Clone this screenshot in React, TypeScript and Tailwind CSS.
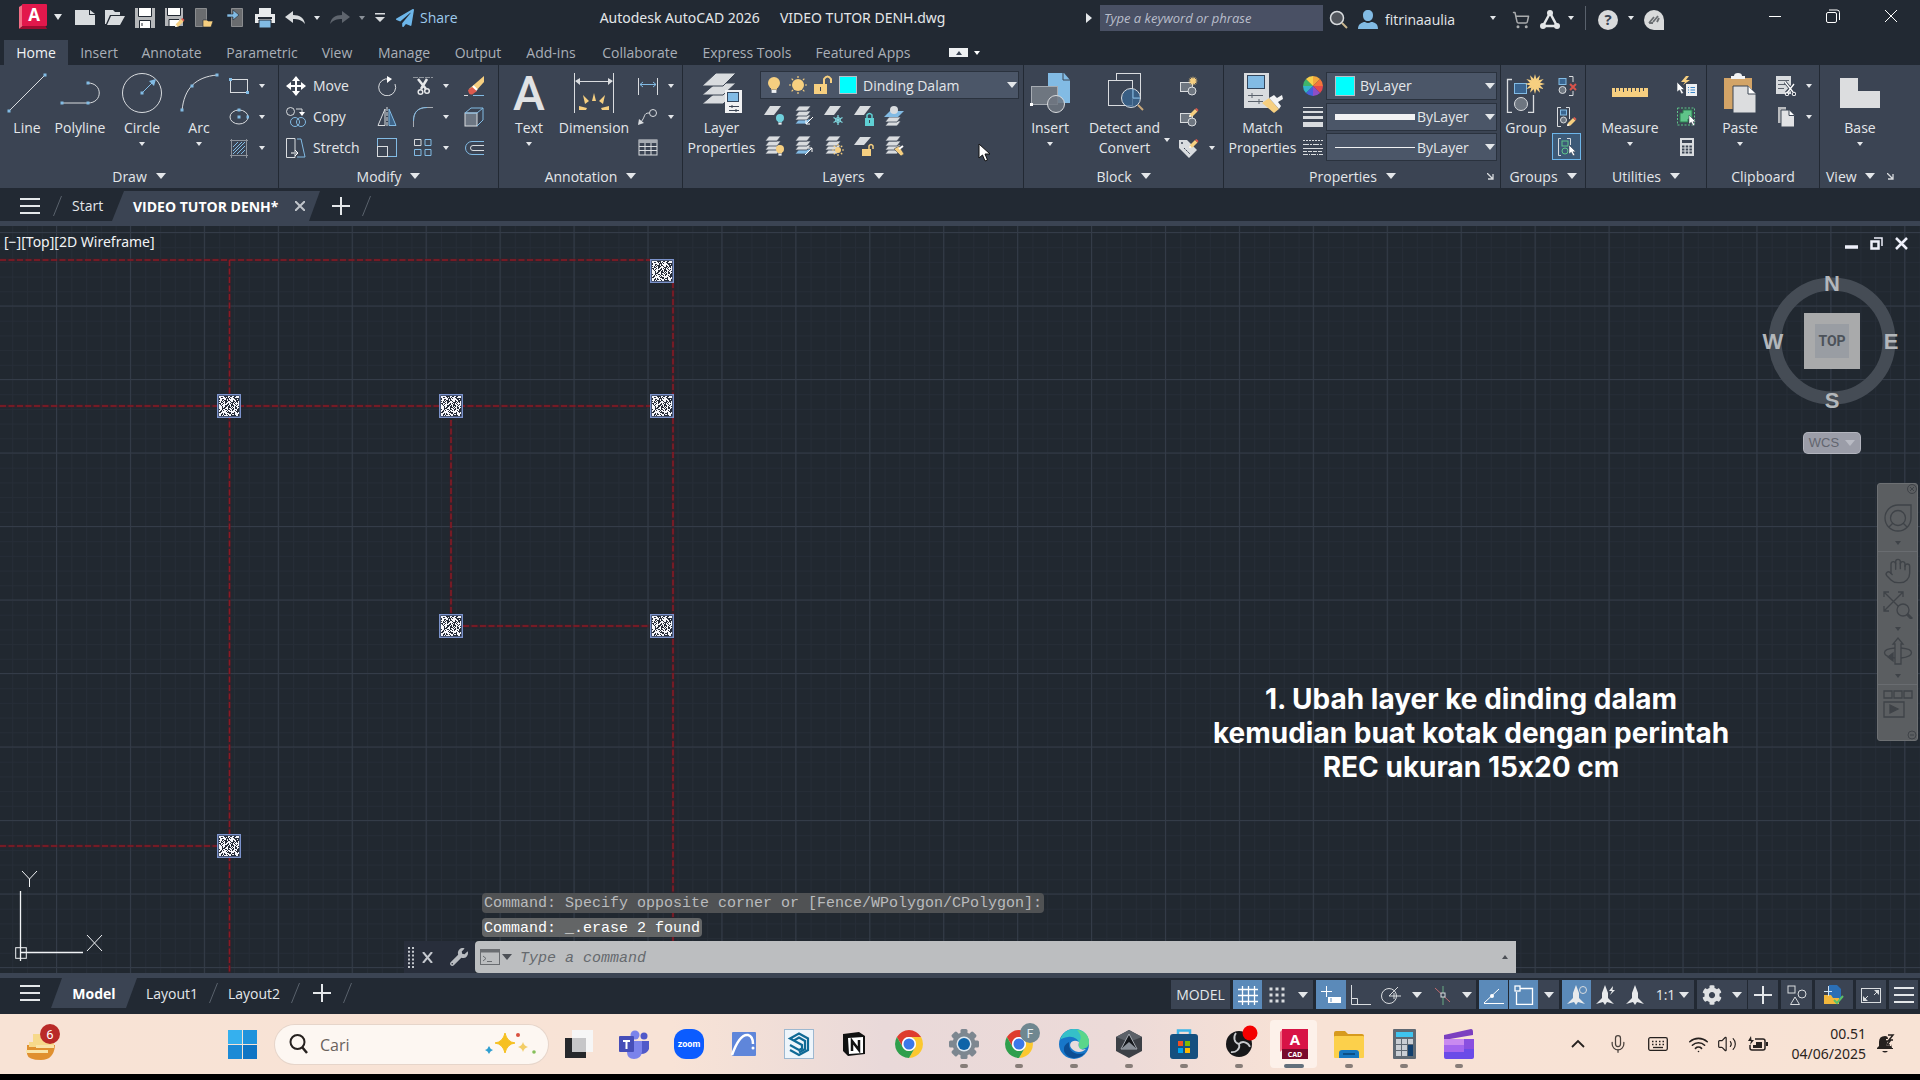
import type { ReactNode } from "react";
import { FaCog, FaWrench, FaPaperPlane } from "react-icons/fa";
import { ShoppingCart, Mic, Wifi, Volume2, Hand } from "lucide-react";

const W = "#d9dcdf";
const B = "#82bbe4";
const Y = "#f6cf80";

function Svg({ s = 20, children, className = "" }: { s?: number; children: ReactNode; className?: string }) {
  return (
    <svg
      width={s}
      height={s}
      viewBox={`0 0 ${s} ${s}`}
      fill="none"
      stroke={W}
      strokeWidth={1}
      className={"shrink-0 " + className}
      aria-hidden="true"
    >
      {children}
    </svg>
  );
}

function Caret({ big = false, className = "" }: { big?: boolean; className?: string }) {
  return (
    <svg
      width={big ? 10 : 6}
      height={big ? 6 : 4}
      viewBox="0 0 10 6"
      preserveAspectRatio="none"
      className={"shrink-0 " + className}
      fill="currentColor"
      aria-hidden="true"
    >
      <path d="M0 0H10L5 6Z" />
    </svg>
  );
}

function Dot({ x, y, r = 3 }: { x: number; y: number; r?: number }) {
  return <rect x={x - r / 2} y={y - r / 2} width={r} height={r} fill={B} stroke="none" />;
}

/* ---------- ribbon building blocks ---------- */

function Big({
  icon,
  label,
  second,
  caret,
  className,
}: {
  icon: ReactNode;
  label: string;
  second?: string;
  caret?: boolean;
  className: string;
}) {
  return (
    <button className={"flex shrink-0 flex-col items-center pt-2 leading-5 " + className}>
      {icon}
      <span className="mt-[5px] whitespace-nowrap">{label}</span>
      {second && <span className="whitespace-nowrap">{second}</span>}
      {caret && <Caret className="mt-1" />}
    </button>
  );
}

function Small({ label, icon, caret }: { label: string; icon: ReactNode; caret?: boolean }) {
  return (
    <div className="flex h-[31px] items-center gap-[3px]">
      <button aria-label={label}>{icon}</button>
      {caret && (
        <button aria-label={label + " options"} className="flex h-5 w-5 items-center justify-center">
          <Caret />
        </button>
      )}
    </div>
  );
}

function Col({ children, className = "" }: { children: ReactNode; className?: string }) {
  return <div className={"flex shrink-0 flex-col pt-[5px] " + className}>{children}</div>;
}

function Launcher() {
  return (
    <svg width="7" height="7" viewBox="0 0 7 7" stroke="#d9dcdf" strokeWidth="1.3" fill="none" aria-hidden="true">
      <path d="M0 0L6 6M6 1V6H1" />
    </svg>
  );
}

function Panel({
  title,
  menu = true,
  launcher,
  className,
  children,
}: {
  title: string;
  menu?: boolean;
  launcher?: boolean;
  className: string;
  children: ReactNode;
}) {
  return (
    <section className={"flex flex-col border-r border-[#222933] " + className}>
      <div className="flex h-[99px]">{children}</div>
      <div className="flex h-6 items-center">
        <div className="flex flex-1 items-center justify-center gap-[9px]">
          <span>{title}</span>
          {menu && <Caret big />}
        </div>
        {launcher && (
          <button aria-label={title + " settings"} className="mx-[6px]">
            <Launcher />
          </button>
        )}
      </div>
    </section>
  );
}

function Combo({
  label,
  value,
  before,
  className = "",
  selectClass = "",
}: {
  label: string;
  value: string;
  before: ReactNode;
  className?: string;
  selectClass?: string;
}) {
  return (
    <div className={"flex h-7 items-center border border-[#2a323e] bg-[#4b5668] pr-px " + className}>
      {before}
      <select aria-label={label} className={"h-full min-w-0 flex-1 appearance-none bg-transparent outline-none " + selectClass}>
        <option>{value}</option>
      </select>
      <Caret big />
    </div>
  );
}

/* ---------- reusable drawings ---------- */

const Sheet = ({ y, fill = W }: { y: number; fill?: string }) => (
  <path d={`M5 ${y}H17L13 ${y + 5}H1Z`} fill={fill} stroke="#3b4453" strokeWidth=".8" />
);

const Stack = ({ blue = false }: { blue?: boolean }) => (
  <>
    <Sheet y={13} fill={blue ? B : W} />
    <Sheet y={9} />
    <Sheet y={5} />
    <Sheet y={0} />
  </>
);

const Sun = ({ x, y, r, c = Y }: { x: number; y: number; r: number; c?: string }) => (
  <g transform={`translate(${x} ${y})`} stroke={c} strokeWidth="1.2">
    <circle r={r} fill={c} stroke="none" />
    {[0, 45, 90, 135, 180, 225, 270, 315].map((a) => (
      <path key={a} d={`M0 ${-r - 1}V${-r - 3}`} transform={`rotate(${a})`} />
    ))}
  </g>
);

const Burst = ({ x, y, r }: { x: number; y: number; r: number }) => (
  <g transform={`translate(${x} ${y})`} fill={Y} stroke="none">
    {[0, 30, 60, 90, 120, 150, 180, 210, 240, 270, 300, 330].map((a) => (
      <path key={a} d={`M${-r * 0.28} 0L0 ${-r}L${r * 0.28} 0Z`} transform={`rotate(${a})`} />
    ))}
  </g>
);

const Pencil = ({ x, y }: { x: number; y: number }) => (
  <g transform={`translate(${x} ${y})`} stroke="none">
    <path d="M0 9L1 6L6 1L8.500 3.500L3.500 8.500Z" fill={Y} />
    <path d="M6 1L7.500 0L9.500 2L8.500 3.500Z" fill="#dc5a4e" />
    <path d="M0 9L.8 6.600L2.600 8.400Z" fill="#fff" />
  </g>
);

const Cursor = ({ x, y, s = 1 }: { x: number; y: number; s?: number }) => (
  <path
    transform={`translate(${x} ${y}) scale(${s})`}
    d="M0 0V10L2.500 8L4.500 12L6.500 11L4.500 7.500H7.500Z"
    fill="#fff"
    stroke="#3b4453"
    strokeWidth=".6"
  />
);

const Scissors = ({ x, y }: { x: number; y: number }) => (
  <g transform={`translate(${x} ${y})`} stroke="#e6e8ea" strokeWidth="1.5">
    <path d="M0 0L8 10M9 0L3 10" strokeWidth="2.500" />
    <circle cx="2.500" cy="13" r="2.300" />
    <circle cx="9" cy="12" r="2.300" />
  </g>
);

const Bulb = ({ x, y, r, c }: { x: number; y: number; r: number; c: string }) => (
  <g transform={`translate(${x} ${y})`} stroke="none">
    <circle r={r} fill={c} />
    <path d={`M${-r * 0.5} ${r * 0.7}H${r * 0.5}V${r * 1.1}H${-r * 0.5}Z`} fill={c} />
    <rect x={-r * 0.4} y={r * 1.15} width={r * 0.8} height={r * 0.5} fill="#eef0f2" />
  </g>
);

/* ---------- title bar ---------- */

const quickIcons: { label: string; gap: string; art: ReactNode }[] = [
  { label: "New", gap: "", art: <path d="M0 2H14V7H20V17H0Z M15 2L20 6H15Z" fill={W} stroke="none" /> },
  {
    label: "Open",
    gap: "ml-[10px]",
    art: <path d="M0 16V2H8L10 4H15V7H5L1 16ZM6 8H20L15 17H2Z" fill={W} stroke="none" />,
  },
  {
    label: "Save",
    gap: "ml-[10px]",
    art: (
      <>
        <path d="M0 0H20V20H0Z" fill="#b5b7ba" stroke="none" />
        <path d="M4 0H16V8H4ZM5 12H15V20H5Z" fill="#fff" stroke="none" />
        <path d="M3.500 0V8.500H16.500V0M4.500 20V12.500H15.500V20M7 15V18" stroke="#222933" />
      </>
    ),
  },
  {
    label: "Save As",
    gap: "ml-[10px]",
    art: (
      <>
        <path d="M0 0H18V18H0Z" fill="#b5b7ba" stroke="none" />
        <path d="M3 0H15V7H3ZM4 11H14V18H4Z" fill="#fff" stroke="none" />
        <path d="M2.500 0V7.500H15.500V0M4 18V11.500H14" stroke="#222933" />
        <Pencil x={10} y={10} />
      </>
    ),
  },
  {
    label: "Open from Web and Mobile",
    gap: "ml-[10px]",
    art: (
      <>
        <path d="M.5 .5H11.500V18.500H.5Z" fill="#6a6c6f" stroke="#8a8c8f" />
        <path d="M8 12H12L13 13H18L16 19H8Z" fill={Y} stroke="#222933" strokeWidth=".6" />
      </>
    ),
  },
  {
    label: "Save to Web and Mobile",
    gap: "ml-[10px]",
    art: (
      <>
        <path d="M6.500 .5H17.500V18.500H6.500Z" fill="#6a6c6f" stroke="#8a8c8f" />
        <path d="M2 6H8V2L14 7L8 12V9H2Z" fill={B} stroke="#222933" strokeWidth=".6" />
      </>
    ),
  },
  {
    label: "Plot",
    gap: "ml-[10px]",
    art: (
      <>
        <path d="M4 0H16V6H4ZM0 6H20V15H0Z" fill="#e8eaec" stroke="none" />
        <path d="M3 9H17V11H3Z" fill="#222933" stroke="none" />
        <path d="M4 12H16V20H4Z" fill={B} stroke="#222933" />
      </>
    ),
  },
];

function TitleBar() {
  return (
    <header className="flex h-10 items-center pl-[18px] text-[14px] text-[#e4e7ea]">
      <button aria-label="Application menu" className="flex items-center gap-[6px] self-start pt-1">
        <svg width="30" height="26" viewBox="0 0 30 26" aria-hidden="true">
          <path d="M1 3L6 0V21L1 25Z" fill="#f26e85" />
          <path d="M1 25L6 21H27L29 25Z" fill="#9f0c31" />
          <rect x="4" width="25" height="22" rx="1" fill="#e2184c" />
          <text x="16" y="17" fontSize="17" fontWeight="700" fontFamily="Open Sans" fill="#fff" textAnchor="middle">
            A
          </text>
        </svg>
        <Caret big className="w-2" />
      </button>
      <div className="flex items-center self-start pl-[13px] pt-[7px]">
        {quickIcons.map((q) => (
          <button key={q.label} aria-label={q.label} className={q.gap}>
            <Svg>{q.art}</Svg>
          </button>
        ))}
        <button aria-label="Undo" className="ml-[10px]">
          <Svg>
            <path d="M0 9L8 3V7C15 7 19 10 20 16C17 12 13 11 8 11V15Z" fill={W} stroke="none" />
          </Svg>
        </button>
        <Caret className="ml-[9px]" />
        <button aria-label="Redo" className="ml-[10px]">
          <Svg>
            <path d="M20 9L12 3V7C5 7 1 10 0 16C3 12 7 11 12 11V15Z" fill="#5e646d" stroke="none" />
          </Svg>
        </button>
        <Caret className="ml-[9px] text-[#8a9098]" />
        <button aria-label="Customize quick access" className="ml-[9px]">
          <svg width="12" height="9" viewBox="0 0 12 9" fill="#d9dcdf" aria-hidden="true">
            <path d="M1 0H11V1.500H1ZM1 4H11L6 9Z" />
          </svg>
        </button>
        <button className="ml-[10px] flex items-center gap-[6px] text-[#9ecbee]">
          <FaPaperPlane size={18} color="#6db6ea" />
          Share
        </button>
      </div>
      <div className="ml-[142px] mt-[8px] flex gap-5 self-start whitespace-pre font-['Noto_Sans',sans-serif] text-[14px] leading-5">
        <span>Autodesk AutoCAD 2026</span>
        <span>VIDEO TUTOR DENH.dwg</span>
      </div>
      <div className="ml-auto flex shrink-0 items-center self-start">
        <svg width="6" height="10" viewBox="0 0 6 10" className="mr-2 mt-[5px]" fill="#e4e7ea" aria-hidden="true">
          <path d="M0 0L6 5L0 10Z" />
        </svg>
        <input
          aria-label="Search help"
          placeholder="Type a keyword or phrase"
          className="mt-[5px] h-[26px] w-[223px] bg-[#495064] px-1 text-[13px] italic text-white placeholder-[#b9becb] outline-none"
        />
        <button aria-label="Search" className="ml-[6px] mt-2">
          <Svg>
            <circle cx="8" cy="8" r="6.500" fill="#51555c" strokeWidth="1.500" />
            <path d="M13 13L18 18" stroke="#c9b68f" strokeWidth="2" />
          </Svg>
        </button>
        <button className="ml-[9px] mt-2 flex items-center gap-[7px]">
          <Svg>
            <path
              d="M10 0C13 0 15 2 15 5C15 9 13 11 10 11S5 9 5 5C5 2 7 0 10 0ZM0 19C0 14 4 12 7 12Q10 14 13 12C17 12 20 14 20 19Z"
              fill={B}
              stroke="none"
            />
          </Svg>
          <span className="w-[97px] text-left">fitrinaaulia</span>
        </button>
        <Caret className="ml-[8px] mt-[5px]" />
        <button aria-label="App store" className="ml-[16px] mt-2">
          <ShoppingCart size={18} color="#a9abad" />
        </button>
        <button aria-label="Autodesk account" className="ml-[10px] mt-2">
          <Svg>
            <path d="M10 3L3 16H17Z" stroke="#e4e6e8" strokeWidth="2.500" />
            <g fill="#e4e6e8" stroke="none">
              <circle cx="10" cy="3" r="3" />
              <circle cx="3" cy="16" r="3" />
              <circle cx="17" cy="16" r="3" />
            </g>
          </Svg>
        </button>
        <Caret className="ml-[8px] mt-[5px]" />
        <span className="ml-[11px] mt-[5px] h-6 w-px bg-[#59616c]" />
        <button
          aria-label="Help"
          className="ml-[12px] mt-2 flex h-5 w-5 items-center justify-center rounded-full bg-[#d9dadb] text-[15px] font-bold text-[#3b4453]"
        >
          ?
        </button>
        <Caret className="ml-[10px] mt-[5px]" />
        <button aria-label="Autodesk Assistant" className="ml-[10px] mt-2">
          <Svg>
            <path d="M10 0A10 10 0 0 1 20 10V20H10A10 10 0 0 1 10 0Z" fill="#d9dadb" stroke="none" />
            <path d="M5 13L10 7M9 12L14 6M13 12L15 8M5 13H9" stroke="#6a6d71" strokeWidth="1.800" />
          </Svg>
        </button>
        <button aria-label="Minimize" className="ml-[104px] mt-[1px]">
          <Svg s={14}>
            <path d="M1 7.500H13" stroke="#fff" />
          </Svg>
        </button>
        <button aria-label="Restore" className="ml-[44px] mt-[1px]">
          <Svg s={14}>
            <rect x=".5" y="3.500" width="10" height="10" rx="1.500" stroke="#fff" />
            <path d="M3 1H11Q13.500 1 13.500 3.500V11" stroke="#fff" />
          </Svg>
        </button>
        <button aria-label="Close" className="ml-[44px] mr-[22px] mt-[1px]">
          <Svg s={14}>
            <path d="M1 1L13 13M13 1L1 13" stroke="#fff" />
          </Svg>
        </button>
      </div>
    </header>
  );
}

const ribbonTabs = [
  { name: "Insert", w: "w-[62px]" },
  { name: "Annotate", w: "w-[83px]" },
  { name: "Parametric", w: "w-[98px]" },
  { name: "View", w: "w-[52px]" },
  { name: "Manage", w: "w-[82px]" },
  { name: "Output", w: "w-[66px]" },
  { name: "Add-ins", w: "w-[80px]" },
  { name: "Collaborate", w: "w-[98px]" },
  { name: "Express Tools", w: "w-[116px]" },
  { name: "Featured Apps", w: "w-[116px]" },
];

function RibbonTabs() {
  return (
    <nav className="flex h-[25px] pl-1 text-[14px] text-[#a9afb8]">
      <button className="w-16 bg-[#3b4453] text-[#f1f3f5]">Home</button>
      {ribbonTabs.map((t) => (
        <button key={t.name} className={"shrink-0 whitespace-nowrap " + t.w}>
          {t.name}
        </button>
      ))}
      <button aria-label="Minimize ribbon" className="ml-7 flex items-center gap-[6px] text-white">
        <span className="flex h-[9px] w-[19px] items-center justify-center bg-[#eef0f2] text-[#3b4453]">
          <Caret className="rotate-180" />
        </span>
        <Caret />
      </button>
    </nav>
  );
}

/* ---------- ribbon ---------- */

function Ribbon() {
  return (
    <div className="flex h-[123px] overflow-hidden bg-[#3b4453] text-[14px] text-[#e4e7ea]">
      <Panel title="Draw" className="w-[279px] shrink-0">
        <Big
          className="w-[54px]"
          label="Line"
          icon={
            <Svg s={40}>
              <path d="M2 38L38 2" />
              <Dot x={2} y={38} />
              <Dot x={38} y={2} />
            </Svg>
          }
        />
        <Big
          className="w-[52px]"
          label="Polyline"
          icon={
            <Svg s={40}>
              <path d="M2 30H28C43 30 43 10 28 10" />
              <Dot x={2} y={30} />
              <Dot x={28} y={30} />
              <Dot x={28} y={10} />
            </Svg>
          }
        />
        <Big
          className="w-[72px]"
          label="Circle"
          caret
          icon={
            <Svg s={40}>
              <circle cx="20" cy="20" r="19.500" />
              <path d="M20 20L30 10" stroke={B} />
              <path d="M34 6L32 13L27 8Z" fill={B} stroke="none" />
              <Dot x={20} y={20} />
            </Svg>
          }
        />
        <Big
          className="w-[42px]"
          label="Arc"
          caret
          icon={
            <Svg s={40}>
              <path d="M3 38C5 15 17 4 38 2" />
              <Dot x={3} y={37} />
              <Dot x={13} y={13} />
              <Dot x={38} y={2} />
            </Svg>
          }
        />
        <Col className="ml-[9px]">
          <Small
            label="Rectangle"
            caret
            icon={
              <Svg>
                <rect x="1.500" y="3.500" width="17" height="13" />
                <Dot x={1.5} y={3.5} />
                <Dot x={18.5} y={16.5} />
              </Svg>
            }
          />
          <Small
            label="Ellipse"
            caret
            icon={
              <Svg>
                <ellipse cx="10" cy="10" rx="9" ry="7" />
                <Dot x={10} y={3} />
                <Dot x={10} y={10} />
                <Dot x={19} y={10} />
              </Svg>
            }
          />
          <Small
            label="Hatch"
            caret
            icon={
              <Svg>
                <path d="M1 2.500H19M1 17.500H19M2.500 1V20M17.500 1V20" stroke="#8e949c" />
                <path d="M4 9L9 4M4 13L13 4M4 16L16 4M8 16L16 8M12 16L16 12" stroke={B} />
              </Svg>
            }
          />
        </Col>
      </Panel>

      <Panel title="Modify" className="w-[220px] shrink-0">
        <Col className="w-[98px] pl-[7px]">
          <button className="flex h-[31px] items-center gap-[7px]">
            <Svg>
              <path d="M10 1V19M1 10H19" strokeWidth="2" stroke="#fff" />
              <path d="M10 0L14 5H6ZM10 20L14 15H6ZM0 10L5 6V14ZM20 10L15 6V14Z" fill="#fff" stroke="none" />
            </Svg>
            Move
          </button>
          <button className="flex h-[31px] items-center gap-[7px]">
            <Svg>
              <circle cx="4.500" cy="4.500" r="4" />
              <circle cx="9" cy="15" r="4.500" stroke={B} />
              <circle cx="15" cy="15" r="4.500" stroke={B} />
              <path d="M10 2H16V7" />
              <path d="M13 5H19L16 9Z" fill="#fff" stroke="none" />
            </Svg>
            Copy
          </button>
          <button className="flex h-[31px] items-center gap-[7px]">
            <Svg>
              <path d="M9 14V.5H.5V19.500H9V16" />
              <path d="M11 1H15L19 19H11" stroke={B} />
              <path d="M5 15H12M9 12L12 15L9 18" stroke="#fff" />
            </Svg>
            Stretch
          </button>
        </Col>
        <Col>
          <Small
            label="Rotate"
            icon={
              <Svg>
                <path d="M12 3A8.500 8.500 0 1 0 18 8" />
                <path d="M10 0L15 3L10 7Z" fill="#fff" stroke="none" />
              </Svg>
            }
          />
          <Small
            label="Mirror"
            icon={
              <Svg>
                <path d="M8 2V18.500H1Z" />
                <path d="M12 2V18.500H19Z" stroke={B} fill="#3e6488" />
                <path d="M10 0V20" strokeDasharray="4 1" />
              </Svg>
            }
          />
          <Small
            label="Scale"
            icon={
              <Svg>
                <rect x=".5" y=".5" width="19" height="18" stroke={B} />
                <rect x=".5" y="8.500" width="10" height="10" />
              </Svg>
            }
          />
        </Col>
        <Col className="ml-4">
          <Small
            label="Trim"
            caret
            icon={
              <Svg>
                <path d="M0 1.500H20" stroke="#8e949c" strokeDasharray="5 1" />
                <Scissors x={5} y={3} />
              </Svg>
            }
          />
          <Small
            label="Fillet"
            caret
            icon={
              <Svg>
                <path d="M.5 20V14C.5 5 5 .5 14 .5H20" stroke="#a6abb2" />
                <path d="M.5 14C.5 5 5 .5 14 .5" stroke={B} />
              </Svg>
            }
          />
          <Small
            label="Array"
            caret
            icon={
              <Svg>
                <path d="M1.500 1.500H8V7.500H1.500Z" />
                <path d="M12 1.500H18V7.500H12ZM1.500 11.500H8V17.500H1.500ZM12 11.500H18V17.500H12Z" stroke={B} />
              </Svg>
            }
          />
        </Col>
        <Col className="ml-2">
          <Small
            label="Erase"
            icon={
              <Svg>
                <path d="M20 0V6L11 16L5 13Z" fill={Y} stroke="none" />
                <path d="M8 11L13 15L9 18Q5 20 4 14Z" fill="#dc5a4e" stroke="none" />
                <path d="M9 10L13 14" stroke="#fff" strokeWidth="2" />
                <path d="M0 19.500H4" />
                <path d="M9 19.500H20" stroke={B} />
              </Svg>
            }
          />
          <Small
            label="Explode"
            icon={
              <Svg>
                <rect x="1" y="6" width="12" height="13" fill="#6c7683" />
                <path d="M1 6L7 1H19L13 6ZM13 19L19 13V1" stroke={B} />
              </Svg>
            }
          />
          <Small
            label="Offset"
            icon={
              <Svg>
                <path d="M20 3.500H8A6.500 6.500 0 0 0 8 16.500H20" stroke={B} />
                <path d="M20 7.500H9A2.500 2.500 0 0 0 9 12.500H20" />
              </Svg>
            }
          />
        </Col>
      </Panel>

      <Panel title="Annotation" className="w-[184px] shrink-0">
        <Big
          className="w-[60px]"
          label="Text"
          caret
          icon={
            <Svg s={40} className="overflow-visible">
              <text
                x="20"
                y="37"
                fontSize="48"
                fontWeight="500"
                fontFamily="Roboto"
                fill="#e0e2e4"
                stroke="none"
                textAnchor="middle"
              >
                A
              </text>
            </Svg>
          }
        />
        <Big
          className="w-[70px]"
          label="Dimension"
          icon={
            <Svg s={40}>
              <path d="M.5 0V40M39.500 0V40M2 8.500H38" />
              <path d="M1 8L6 5V12ZM39 8L34 5V12Z" fill={W} stroke="none" />
              <path
                d="M18 28L20 20L22 28ZM11 31L9 22L15 28ZM29 31L31 22L25 28ZM5 33L13 35L12 37H5ZM35 33L27 35L28 37H35Z"
                fill={Y}
                stroke="none"
              />
            </Svg>
          }
        />
        <Col className="ml-[9px]">
          <Small
            label="Linear"
            caret
            icon={
              <Svg>
                <path d="M.5 2V19M19.500 2V19" />
                <path d="M2 8.500H18M5 6L2 8.500L5 11M15 6L18 8.500L15 11" stroke={B} />
              </Svg>
            }
          />
          <Small
            label="Leader"
            caret
            icon={
              <Svg>
                <circle cx="15" cy="6" r="3.500" />
                <path d="M11 6C5 6 8 10 2 16" />
                <path d="M0 18L1 12L6 16Z" fill={W} stroke="none" />
              </Svg>
            }
          />
          <Small
            label="Table"
            icon={
              <Svg>
                <rect x="1" y="2" width="18" height="15" />
                <path d="M1 3.500H19" strokeWidth="3" stroke="#a6abb2" />
                <path d="M1 8.500H19M1 12.500H19M7 5V17M13 5V17" />
              </Svg>
            }
          />
        </Col>
      </Panel>

      <Panel title="Layers" className="min-w-[340px] flex-1">
        <Big
          className="w-[77px]"
          label="Layer"
          second="Properties"
          icon={
            <Svg s={40}>
              <path d="M14 19H34L21 31H0Z" fill={W} stroke="#3b4453" />
              <path d="M14 10H34L21 22H0Z" fill={W} stroke="#3b4453" />
              <path d="M14 0H34L21 13H0Z" fill={W} stroke="#3b4453" />
              <rect x="23" y="17" width="17" height="23" fill="#f0f1f2" stroke="none" />
              <rect x="25.500" y="19.500" width="11" height="9" fill={B} stroke="#33465c" />
              <path d="M27 33.500H37M27 37.500H37M30 32V35M34 36V39" stroke="#3b4453" />
            </Svg>
          }
        />
        <div className="flex min-w-0 flex-1 flex-col pr-1 pt-[6px]">
          <Combo
            label="Layer"
            value="Dinding Dalam"
            selectClass="pl-[6px]"
            before={
              <span className="flex items-center gap-1 pl-[3px]">
                <Svg>
                  <Bulb x={10} y={8} r={6} c={Y} />
                </Svg>
                <Svg>
                  <Sun x={10} y={10} r={6} />
                </Svg>
                <Svg>
                  <path d="M2 9H15V19H2Z" fill={Y} stroke="none" />
                  <path d="M12 9V4Q15.500 -1 19 4V8" stroke={Y} strokeWidth="2" />
                  <path d="M8.500 12V16" stroke="#3b4453" />
                </Svg>
                <span className="ml-[3px] h-[18px] w-[18px] border border-[#b8c0c8] bg-[#00ffff]" />
              </span>
            }
          />
          <div className="mt-[2px] flex h-[30px] items-center gap-[10px] pl-[4px]">
            <button aria-label="Layer off">
              <Svg>
                <path d="M6 0H17L10 9H0Z" fill={W} stroke="none" />
                <Bulb x={16} y={12} r={4} c="#6fd0dc" />
              </Svg>
            </button>
            <button aria-label="Isolate">
              <Svg>
                <Stack blue />
                <path d="M19 11L12 18M12 14V18H16" stroke="#fff" />
              </Svg>
            </button>
            <button aria-label="Freeze">
              <Svg>
                <path d="M6 0H17L10 9H0Z" fill={W} stroke="none" />
                <path d="M14 9V19M9.500 11.500L18.500 16.500M18.500 11.500L9.500 16.500" stroke="#7fd6de" strokeWidth="1.300" />
                <circle cx="14" cy="14" r="2.500" stroke="#7fd6de" />
              </Svg>
            </button>
            <button aria-label="Lock">
              <Svg>
                <path d="M6 0H17L10 9H0Z" fill={W} stroke="none" />
                <path d="M11 12H20V20H11Z" fill="#5fd0d4" stroke="none" />
                <path d="M13 12V9Q15.500 6 18 9V12" stroke="#5fd0d4" strokeWidth="1.500" />
                <path d="M15.500 14V17" stroke="#3b4453" />
              </Svg>
            </button>
            <button aria-label="Make current">
              <Svg>
                <Sheet y={15} />
                <Sheet y={11} />
                <path d="M6 5H20L14 11H0Z" fill={B} stroke="none" />
                <circle cx="10" cy="4" r="4" fill={W} stroke="none" />
              </Svg>
            </button>
          </div>
          <div className="flex h-[30px] items-center gap-[10px] pl-[4px]">
            <button aria-label="Turn all layers on">
              <Svg>
                <Stack />
                <Bulb x={16} y={13} r={4} c={Y} />
              </Svg>
            </button>
            <button aria-label="Unisolate">
              <Svg>
                <Stack blue />
                <path d="M11 19L18 12M14 12H18V16" stroke="#fff" />
              </Svg>
            </button>
            <button aria-label="Thaw all layers">
              <Svg>
                <Stack />
                <Sun x={14} y={14} r={3} />
              </Svg>
            </button>
            <button aria-label="Unlock">
              <Svg>
                <path d="M6 1H17L10 9H0Z" fill={W} stroke="none" />
                <path d="M8 13H17V20H8Z" fill={Y} stroke="none" />
                <path d="M15 13V10Q17 7 19 10V13" stroke={Y} strokeWidth="1.500" />
              </Svg>
            </button>
            <button aria-label="Match layer">
              <Svg>
                <Stack />
                <path d="M10 13L15 10L20 18L17 20Z" fill={Y} stroke="#3b4453" strokeWidth=".6" />
                <path d="M15 13L19 10" stroke="#fff" strokeWidth="2" />
              </Svg>
            </button>
          </div>
        </div>
      </Panel>

      <Panel title="Block" className="w-[200px] shrink-0">
        <Big
          className="w-[52px]"
          label="Insert"
          caret
          icon={
            <Svg s={40}>
              <path d="M18 0H34L40 7V30H18Z" fill={B} stroke="none" />
              <path d="M33 0V7H40" stroke="#3b4453" />
              <rect x="1.500" y="13.500" width="26" height="18" fill="#6e7680" stroke="#a6abb2" />
              <circle cx="26" cy="31" r="8.500" fill="#6e7680" fillOpacity=".85" />
              <rect y="30" width="3" height="3" fill="#fff" stroke="none" />
            </Svg>
          }
        />
        <div className="relative">
          <Big
            className="w-[97px]"
            label="Detect and"
            second="Convert"
            icon={
              <Svg s={40}>
                <rect x="11.500" y=".5" width="24" height="25" />
                <rect x="3.500" y="7.500" width="24" height="25" fill="#3b4453" />
                <circle cx="26" cy="25" r="9.500" fill="#3a6590" fillOpacity=".8" />
                <path d="M28 16V25H35" stroke={B} />
                <path d="M33 32L38 37" stroke="#c9a87a" strokeWidth="2" />
              </Svg>
            }
          />
          <Caret className="absolute right-[3px] top-[73px]" />
        </div>
        <Col className="ml-[6px]">
          <Small
            label="Create block"
            icon={
              <Svg>
                <rect x="1.500" y="6.500" width="12" height="9" fill="#6e7680" />
                <circle cx="13" cy="15" r="4" fill="#6e7680" />
                <Burst x={14} y={5} r={5} />
              </Svg>
            }
          />
          <Small
            label="Edit block"
            icon={
              <Svg>
                <rect x="1.500" y="6.500" width="12" height="9" fill="#6e7680" />
                <circle cx="13" cy="15" r="4" fill="#6e7680" />
                <Pencil x={10} y={1} />
              </Svg>
            }
          />
          <Small
            label="Edit attributes"
            caret
            icon={
              <Svg>
                <path d="M0 2H8L18 12L10 20L0 10Z" fill={W} stroke="none" />
                <circle cx="3" cy="5" r="1" fill="#3b4453" stroke="none" />
                <path d="M5 10L11 16" stroke="#3b4453" strokeDasharray="2 1" />
                <Pencil x={10} y={1} />
              </Svg>
            }
          />
        </Col>
      </Panel>

      <Panel title="Properties" launcher className="w-[277px] shrink-0">
        <Big
          className="w-[77px]"
          label="Match"
          second="Properties"
          icon={
            <Svg s={40}>
              <rect x="1" width="25" height="35" fill={W} stroke="none" />
              <rect x="4.500" y="2.500" width="17" height="13" fill={B} stroke="#33465c" />
              <path d="M5 22.500H20M5 28.500H20M9 20V25M16 26V31" stroke="#5b626c" />
              <path d="M19 30L26 25L36 36L31 40Z" fill={Y} stroke="none" />
              <path d="M26 25L31 22L34 25L39 22L40 26L35 29L38 33L36 36Z" fill="#f2f3f4" stroke="none" />
            </Svg>
          }
        />
        <Col className="ml-[2px]">
          <Small
            label="Object color"
            icon={
              <Svg>
                {["#f3a93c", "#f4743b", "#e5484d", "#8e4ec6", "#4560dc", "#33b5c9", "#3fb56a", "#f7d14c"].map((c, i) => (
                  <path key={c} d="M10 10V0A10 10 0 0 1 17.070 2.930Z" fill={c} stroke="none" transform={`rotate(${i * 45} 10 10)`} />
                ))}
              </Svg>
            }
          />
          <Small
            label="Lineweight"
            icon={
              <Svg>
                <path d="M0 .5H20" />
                <path d="M0 5H20" strokeWidth="2" />
                <path d="M0 10.500H20" strokeWidth="3" />
                <path d="M0 17.500H20" strokeWidth="5" />
              </Svg>
            }
          />
          <Small
            label="Linetype"
            icon={
              <Svg>
                <path d="M0 2.500H20" strokeDasharray="2 1" />
                <path d="M0 6.500H20" strokeDasharray="6 1 2 1" />
                <path d="M0 10.500H20" />
                <path d="M0 13.500H20" strokeDasharray="4 1" />
                <path d="M0 16.500H20" strokeDasharray="5 1 1 1" />
              </Svg>
            }
          />
        </Col>
        <Col className="ml-[3px] w-[171px]">
          <div className="flex h-[31px] items-center">
            <Combo
              label="Color"
              value="ByLayer"
              className="flex-1"
              selectClass="pl-[5px]"
              before={<span className="ml-2 h-5 w-5 border border-[#b8c0c8] bg-[#00ffff]" />}
            />
          </div>
          <div className="flex h-[31px] items-center">
            <Combo
              label="Lineweight value"
              value="ByLayer"
              className="flex-1"
              selectClass="pl-[2px]"
              before={<span className="ml-2 h-[6px] w-20 bg-[#f1f2f3]" />}
            />
          </div>
          <div className="flex h-[30px] items-center">
            <Combo
              label="Linetype value"
              value="ByLayer"
              className="flex-1"
              selectClass="pl-[2px]"
              before={<span className="ml-2 h-px w-20 bg-[#f1f2f3]" />}
            />
          </div>
        </Col>
      </Panel>

      <Panel title="Groups" className="w-[85px] shrink-0">
        <Big
          className="w-[50px]"
          label="Group"
          icon={
            <Svg s={40}>
              <path d="M6 6.500H1.500V39.500H6M22 39.500H27.500V22" strokeWidth="1.300" />
              <rect x="8.500" y="10.500" width="12" height="10" fill="#3a6590" stroke={B} />
              <circle cx="15" cy="31" r="6.500" fill="#6e7680" />
              <Burst x={29} y={11} r={10} />
            </Svg>
          }
        />
        <Col className="w-[31px] items-center">
          <Small
            label="Ungroup"
            icon={
              <Svg>
                <rect x="2" y="2.500" width="7" height="6" fill="#3a6590" stroke={B} />
                <circle cx="5.500" cy="14" r="3.500" fill="#6e7680" />
                <path d="M12 .5H16V6M12 19.500H16V15" />
                <path d="M13 8L19 14M19 8L13 14" stroke="#d9534a" strokeWidth="2" />
              </Svg>
            }
          />
          <Small
            label="Group edit"
            icon={
              <Svg>
                <path d="M4 .5H.5V19.500H4M9 .5H12.500V12" />
                <rect x="3.500" y="3" width="6" height="5" fill="#3a6590" stroke={B} />
                <circle cx="6.500" cy="13" r="3" fill="#6e7680" />
                <Pencil x={10} y={10} />
              </Svg>
            }
          />
          <button
            aria-label="Group selection on/off"
            aria-pressed="true"
            className="mt-px flex h-[27px] w-[29px] items-center justify-center border border-[#6db6ea] bg-[#3d5a77]"
          >
            <Svg>
              <path d="M4 1.500H1.500V18.500H4M10 1.500H13.500V8" />
              <rect x="5" y="4" width="6" height="5" stroke="#5fc489" />
              <circle cx="8" cy="14" r="3" stroke="#5fc489" />
              <Cursor x={12} y={8} s={0.9} />
            </Svg>
          </button>
        </Col>
      </Panel>

      <Panel title="Utilities" className="w-[121px] shrink-0">
        <Big
          className="w-[88px]"
          label="Measure"
          caret
          icon={
            <Svg s={40}>
              <path d="M2 15H38V24H2Z" fill={Y} stroke="none" />
              <path d="M5.500 15V19M9.500 15V18M13.500 15V19M17.500 15V18M21.500 15V19M25.500 15V18M29.500 15V19M33.500 15V18" stroke="#3b4453" />
            </Svg>
          }
        />
        <Col className="ml-[3px]">
          <Small
            label="Quick select"
            icon={
              <Svg>
                <path d="M9 0L4 6H8L6 9L13 4H9L12 0Z" fill={Y} stroke="none" />
                <Cursor x={0} y={6} />
                <rect x="9" y="8" width="11" height="12" fill="#eef0f2" stroke="none" />
                <path d="M11 11.500H12M11 14H12M11 16.500H12M13.500 11.500H18M13.500 14H18M13.500 16.500H18" stroke="#3b86c8" />
              </Svg>
            }
          />
          <Small
            label="Select all"
            icon={
              <Svg>
                <rect x=".5" y="1" width="17" height="17" stroke="#5fc489" strokeDasharray="2 1.500" />
                <path d="M6 3H15V12H11V15H3V6H6Z" fill="#5fc489" stroke="#2d7f50" />
                <Cursor x={12} y={8} s={0.9} />
              </Svg>
            }
          />
          <Small
            label="Quick calculator"
            icon={
              <Svg>
                <rect x="3" width="14" height="18" fill={W} stroke="none" />
                <rect x="5" y="2" width="10" height="3" fill="#3b4453" stroke="none" />
                <path d="M5 8.500H15M5 11.500H15M5 14.500H15" stroke="#3b4453" strokeWidth="2" strokeDasharray="2.500 1.200" />
              </Svg>
            }
          />
        </Col>
      </Panel>

      <Panel title="Clipboard" menu={false} className="w-[113px] shrink-0">
        <Big
          className="w-[66px]"
          label="Paste"
          caret
          icon={
            <Svg s={40}>
              <path d="M4 5H32V36H4Z" fill="#d3a467" stroke="none" />
              <path d="M11 6V3H14Q14 0 18 0T22 3H25V6Z" fill="#f2f3f4" stroke="none" />
              <path d="M13 13H28L36 21V40H13Z" fill="#dcdddf" stroke="#3b4453" />
              <path d="M28 13V21H36" fill="#fff" stroke="#3b4453" />
            </Svg>
          }
        />
        <Col className="ml-[3px]">
          <Small
            label="Cut"
            caret
            icon={
              <Svg>
                <path d="M0 0H15V18H0Z" fill={W} stroke="none" />
                <path d="M2 4.500H13M2 8.500H9M2 12.500H8" stroke="#5b626c" />
                <g stroke="#3b4453" strokeWidth="3">
                  <path d="M9 6L18 17M18 8L10 17" />
                </g>
                <path d="M9 6L17 16M18 8L11 17" stroke="#fff" strokeWidth="1.300" />
                <circle cx="11" cy="18" r="1.800" stroke="#fff" />
                <circle cx="18" cy="18" r="1.800" stroke="#fff" />
              </Svg>
            }
          />
          <Small
            label="Copy clip"
            caret
            icon={
              <Svg>
                <path d="M2 0H10V16H2Z" fill="#b9bbbe" stroke="none" />
                <path d="M5 3H13L18.500 8.500V20H5Z" fill="#e1e2e4" stroke="#3b4453" />
                <path d="M13 3V8.500H18.500" fill="#fff" stroke="#3b4453" />
              </Svg>
            }
          />
        </Col>
      </Panel>

      <section className="flex w-[100px] shrink-0 flex-col">
        <div className="flex h-[99px]">
          <Big
            className="w-20"
            label="Base"
            caret
            icon={
              <Svg s={40}>
                <path d="M0 5H18V18H40V35H0Z" fill="#dcdddf" stroke="none" />
              </Svg>
            }
          />
        </div>
        <div className="flex h-6 items-center pl-[6px]">
          <span>View</span>
          <Caret big className="ml-2" />
          <button aria-label="View settings" className="ml-3">
            <Launcher />
          </button>
        </div>
      </section>
    </div>
  );
}

/* ---------- tab strips ---------- */

function Burger() {
  return (
    <svg width="20" height="16" viewBox="0 0 20 16" fill="#e4e7ea" aria-hidden="true">
      <path d="M0 0H20V2H0ZM0 7H20V9H0ZM0 14H20V16H0Z" />
    </svg>
  );
}

function Slash() {
  return (
    <svg width="9" height="20" viewBox="0 0 9 20" stroke="#59616c" aria-hidden="true">
      <path d="M.5 20L8.500 0" />
    </svg>
  );
}

function Plus() {
  return (
    <svg width="18" height="18" viewBox="0 0 18 18" stroke="#e4e7ea" strokeWidth="2" aria-hidden="true">
      <path d="M9 0V18M0 9H18" />
    </svg>
  );
}

function FileTabs() {
  return (
    <nav className="flex h-[33px] items-center pl-5 pt-[2px] text-[14px] text-[#e4e7ea]">
      <button aria-label="File tab menu">
        <Burger />
      </button>
      <span className="ml-[13px]">
        <Slash />
      </span>
      <button className="ml-[10px] w-[40px] text-left">Start</button>
      <div className="flex h-[30px] w-[208px] items-center self-end bg-[#3b4453] pl-[21px] text-white [clip-path:polygon(12px_0,100%_0,calc(100%-11px)_100%,0_100%)]">
        <button className="w-[162px] whitespace-nowrap text-left font-bold">VIDEO TUTOR DENH*</button>
        <button aria-label="Close tab">
          <svg width="10" height="10" viewBox="0 0 10 10" stroke="#c0c4ca" strokeWidth="2" aria-hidden="true">
            <path d="M0 0L10 10M10 0L0 10" />
          </svg>
        </button>
      </div>
      <button aria-label="New tab" className="ml-3">
        <Plus />
      </button>
      <span className="ml-3">
        <Slash />
      </span>
    </nav>
  );
}

/* ---------- drawing area ---------- */

const columns = [
  [650, 33],
  [217, 168],
  [439, 168],
  [650, 168],
  [439, 388],
  [650, 388],
  [217, 608],
];

const speckle = (() => {
  let seed = 90731;
  let d = "";
  for (let y = 0; y < 20; y++) {
    for (let x = 0; x < 20; x++) {
      seed = (seed * 16807) % 2147483647;
      if (seed / 2147483647 > 0.45) {
        d += `M${2 + x} ${2 + y}h1v1h-1z`;
      }
    }
  }
  return d;
})();

const axes = "M0 34H650M0 180H650M463 400H650M0 620H217M229.500 34V747M673 56V747M451 194V389";

function Drawing() {
  return (
    <svg width="100%" height="100%" className="absolute inset-0" aria-hidden="true">
      <defs>
        <pattern id="minor" x="56.500" y="6.500" width="14.786" height="14.700" patternUnits="userSpaceOnUse">
          <path d="M.5 0V14.700M0 .5H14.786" stroke="#262d37" fill="none" />
        </pattern>
        <pattern id="major" x="56" y="6" width="73.930" height="73.500" patternUnits="userSpaceOnUse">
          <path d="M.5 0V73.500M0 .5H73.930" stroke="#343c48" fill="none" />
        </pattern>
      </defs>
      <rect width="100%" height="100%" fill="url(#minor)" />
      <rect width="100%" height="100%" fill="url(#major)" />
      <path d={axes} stroke="#4a1c26" strokeWidth="3" opacity=".5" />
      <path d={axes} stroke="#8a1a24" strokeWidth="1.500" strokeDasharray="6 2.500" />
      {columns.map(([x, y]) => (
        <g key={`${x}-${y}`} transform={`translate(${x} ${y})`}>
          <rect x=".7" y=".7" width="22.600" height="22.600" fill="#262c38" stroke="#7c93cc" strokeWidth="1.400" />
          <path d={speckle} fill="#f6f6fa" />
        </g>
      ))}
      <g stroke="#f1f3f5" fill="none" transform="translate(15 655)">
        <path d="M5.500 10V80M6 71.500H68" strokeWidth="1.300" />
        <rect x=".7" y="66.700" width="10.600" height="10.600" />
        <path d="M7 -10L14.500 -2L22 -10M14.500 -2V6M72 54L87 70M87 54L72 70" />
      </g>
    </svg>
  );
}

function ViewCube() {
  return (
    <div className="absolute right-[18px] top-[43px] flex flex-col items-center">
      <svg width="140" height="144" viewBox="0 0 140 144" aria-hidden="true">
        <circle cx="70" cy="72" r="57" fill="none" stroke="#454c55" strokeWidth="13" />
        <rect x="42" y="44" width="56" height="56" fill="#a9aaab" />
        <rect x="53" y="55" width="34" height="34" fill="#999da3" />
        <g fontFamily="Liberation Sans" fontWeight="700" fontSize="22" fill="#b3b7bb" textAnchor="middle">
          <text x="70" y="22">
            N
          </text>
          <text x="70" y="139">
            S
          </text>
          <text x="11" y="80">
            W
          </text>
          <text x="129" y="80">
            E
          </text>
        </g>
        <text x="70" y="77" fontFamily="Roboto" fontWeight="700" fontSize="14" fill="#4c525a" textAnchor="middle">
          TOP
        </text>
      </svg>
      <button className="mt-5 flex h-5 w-14 items-center justify-center gap-[6px] rounded bg-[#9b9da8] font-['Liberation_Sans'] text-[13px] text-[#62656f] ring-1 ring-[#b3b5be]">
        WCS
        <Caret big className="text-[#b9bbc4]" />
      </button>
    </div>
  );
}

function NavBar() {
  return (
    <div className="absolute right-[2px] top-[257px] flex h-[258px] w-[41px] flex-col items-center rounded-[3px] border border-[#6d7073] bg-[#5b5e61] text-[#3f4348]">
      <svg width="10" height="10" viewBox="0 0 10 10" className="self-end" fill="none" stroke="currentColor" aria-hidden="true">
        <circle cx="5" cy="5" r="4.500" />
        <path d="M3 3L7 7M7 3L3 7" />
      </svg>
      <button aria-label="Steering wheel" className="mt-[10px]">
        <svg width="28" height="28" viewBox="0 0 28 28" fill="none" stroke="currentColor" strokeWidth="1.300" aria-hidden="true">
          <path d="M14 1H27V14A13 13 0 1 1 14 1Z" />
          <circle cx="14" cy="14" r="7.500" />
          <path d="M5 23L9 19M19 19L23 23" />
        </svg>
      </button>
      <Caret className="mt-[9px]" />
      <span className="mt-[6px] h-px w-full bg-[#696c70]" />
      <button aria-label="Pan" className="mt-[5px]">
        <Hand size={28} strokeWidth={1.2} />
      </button>
      <button aria-label="Zoom extents" className="mt-[6px]">
        <svg width="30" height="28" viewBox="0 0 30 28" fill="none" stroke="currentColor" strokeWidth="1.300" aria-hidden="true">
          <path d="M1 1L20 20M20 1L1 20M1 6V1H6M15 1H20V6M1 15V20H6" />
          <circle cx="20" cy="19" r="6" fill="#5b5e61" />
          <path d="M24 23L29 28" strokeWidth="3" />
        </svg>
      </button>
      <Caret className="mt-[8px]" />
      <button aria-label="Orbit" className="mt-[6px]">
        <svg width="30" height="28" viewBox="0 0 30 28" fill="none" stroke="currentColor" strokeWidth="1.300" aria-hidden="true">
          <path d="M12 27V7H10L15 1L20 7H18V27Z" />
          <path d="M12 21C-2 19 -2 12 12 11M18 11C32 12 32 19 18 21" />
          <path d="M5 20L10 16V24Z" fill="currentColor" />
        </svg>
      </button>
      <Caret className="mt-[9px]" />
      <span className="mt-[6px] h-px w-full bg-[#696c70]" />
      <button aria-label="Show motion" className="mt-[5px]">
        <svg width="30" height="28" viewBox="0 0 30 28" fill="none" stroke="currentColor" strokeWidth="1.300" aria-hidden="true">
          <path d="M1 1H9V8H1ZM11 1H19V8H11ZM21 1H29V8H21ZM1 12H21V27H1Z" />
          <path d="M7 15L15 19L7 23Z" fill="currentColor" />
        </svg>
      </button>
      <svg width="10" height="10" viewBox="0 0 10 10" className="mt-auto self-end" fill="none" stroke="currentColor" aria-hidden="true">
        <circle cx="5" cy="5" r="4" />
        <path d="M3 5H7" />
      </svg>
    </div>
  );
}

function CommandArea() {
  return (
    <div className="absolute bottom-0 left-[404px] right-[404px] font-['Liberation_Mono',monospace] text-[15px]">
      <div className="flex flex-col items-start gap-[5px] pl-[78px]">
        <p className="h-5 whitespace-nowrap rounded-sm bg-[#505254] px-[2px] leading-[22px] text-[#b9bbbd]">
          Command: Specify opposite corner or [Fence/WPolygon/CPolygon]:
        </p>
        <p className="h-[19px] whitespace-nowrap rounded-sm bg-[#636566] px-[2px] leading-[21px] text-white">
          Command: _.erase 2 found
        </p>
      </div>
      <div className="mt-1 flex h-8">
        <div className="flex w-[71px] shrink-0 items-center bg-[#282e3b] pl-1">
          <svg width="6" height="21" viewBox="0 0 6 21" stroke="#c4c8ce" strokeWidth="2" strokeDasharray="2 1.800" aria-hidden="true">
            <path d="M1 0V21M5 0V21" />
          </svg>
          <button aria-label="Close command line" className="ml-2">
            <svg width="11" height="11" viewBox="0 0 11 11" stroke="#c4c8ce" strokeWidth="2" aria-hidden="true">
              <path d="M1 0L10 11M10 0L1 11" />
            </svg>
          </button>
          <button aria-label="Customize" className="ml-[17px]">
            <FaWrench size={18} color="#b9bcc1" className="-scale-x-100 rotate-90" />
          </button>
        </div>
        <label className="flex min-w-0 flex-1 items-center rounded-l-sm bg-[#bcbec0] pl-[5px] pr-2 text-[#4c5056]">
          <svg width="20" height="16" viewBox="0 0 20 16" fill="none" stroke="#6a6d71" aria-hidden="true">
            <rect x=".5" y=".5" width="19" height="15" />
            <path d="M0 2H20" strokeWidth="3" />
            <path d="M3 7L6 9.500L3 12M7 12.500H12" />
          </svg>
          <Caret big className="ml-[2px] mr-2" />
          <input
            aria-label="Command"
            placeholder="Type a command"
            className="min-w-0 flex-1 bg-transparent pt-1 italic placeholder-[#666a6e] outline-none"
          />
          <Caret className="rotate-180" />
        </label>
      </div>
    </div>
  );
}

function Canvas() {
  return (
    <main className="relative min-h-[747px] flex-1 overflow-hidden bg-[#212830]">
      <Drawing />
      <p className="absolute left-1 top-[6px] font-['Noto_Sans',sans-serif] text-[14px] leading-5 text-[#f1f3f5]">
        [−][Top][2D Wireframe]
      </p>
      <div className="absolute right-[12px] top-[11px] flex items-center gap-3">
        <button aria-label="Minimize drawing">
          <Svg s={13}>
            <path d="M0 10H13" stroke="#eef0fa" strokeWidth="3.500" />
          </Svg>
        </button>
        <button aria-label="Restore drawing">
          <Svg s={13}>
            <path d="M1.500 4.500H8.500V11.500H1.500Z" stroke="#eef0fa" strokeWidth="2.500" />
            <path d="M4 1H12V9" stroke="#eef0fa" strokeWidth="1.500" />
          </Svg>
        </button>
        <button aria-label="Close drawing">
          <Svg s={13}>
            <path d="M1 1L12 12M12 1L1 12" stroke="#eef0fa" strokeWidth="2.500" />
          </Svg>
        </button>
      </div>
      <ViewCube />
      <NavBar />
      <p className="absolute right-[169px] top-[456px] w-[560px] text-center font-['Inter',sans-serif] text-[28px] font-bold leading-[34px] text-white [font-feature-settings:'calt'_0]">
        1. Ubah layer ke dinding dalam
        <br />
        kemudian buat kotak dengan perintah
        <br />
        REC ukuran 15x20 cm
      </p>
      <CommandArea />
    </main>
  );
}

/* ---------- status bar ---------- */

function Cell({
  label,
  on,
  w = "w-[30px]",
  children,
}: {
  label: string;
  on?: boolean;
  w?: string;
  children: ReactNode;
}) {
  return (
    <button
      aria-label={label}
      className={"flex h-[29px] shrink-0 items-center justify-center " + w + (on ? " bg-[#5b8ab9]" : " bg-[#3b4453]")}
    >
      {children}
    </button>
  );
}

const Compass = ({ children }: { children?: ReactNode }) => (
  <Svg>
    <path d="M9 0L12 8V13L18 19L11 17L9 20L7 17L0 19L6 13V8Z" fill="#e8eaec" stroke="none" />
    {children}
  </Svg>
);

function StatusBar() {
  return (
    <footer className="flex h-[36px] items-start text-[14px] text-[#e4e7ea]">
      <div className="flex h-[30px] items-center pl-5">
        <button aria-label="Layout menu">
          <Burger />
        </button>
        <button className="ml-[11px] h-full w-[86px] bg-[#3b4453] font-bold text-white [clip-path:polygon(11px_0,100%_0,calc(100%-11px)_100%,0_100%)]">
          Model
        </button>
        <button className="ml-[9px] w-[63px] text-left">Layout1</button>
        <Slash />
        <button className="ml-[10px] w-[63px] text-left">Layout2</button>
        <Slash />
        <button aria-label="New layout" className="ml-[13px]">
          <Plus />
        </button>
        <span className="ml-3">
          <Slash />
        </span>
      </div>
      <div className="ml-auto mr-[2px] mt-[2px] flex gap-[3px]">
        <button className="h-[29px] w-[59px] bg-[#3b4453]">MODEL</button>
        <div className="flex">
          <Cell label="Grid" on w="w-[29px]">
            <Svg>
              <path d="M4.500 1V20M10.500 1V20M16.500 1V20M0 4.500H20M0 10.500H20M0 16.500H20" stroke="#fff" strokeWidth="1.300" />
            </Svg>
          </Cell>
          <Cell label="Snap">
            <Svg>
              <path d="M2.500 4H18M2.500 10H18M2.500 16H18" strokeWidth="3" strokeDasharray="3 3" />
            </Svg>
          </Cell>
          <Cell label="Snap options" w="w-[21px]">
            <Caret big />
          </Cell>
        </div>
        <div className="flex">
          <Cell label="Dynamic input" on>
            <Svg>
              <path d="M5.500 1V12M0 6.500H11" stroke="#fff" />
              <rect x="7.500" y="12.500" width="12" height="5" fill="#fff" stroke="#fff" />
              <path d="M10 13V17" stroke="#5b8ab9" />
            </Svg>
          </Cell>
          <Cell label="Ortho">
            <Svg>
              <path d="M.5 0V19.500H20M.5 13.500H6.500V19" />
            </Svg>
          </Cell>
          <Cell label="Polar tracking">
            <Svg>
              <circle cx="8" cy="11" r="7.500" />
              <path d="M8 11H20M8 11L17 2M13 8V14" />
            </Svg>
          </Cell>
          <Cell label="Polar options" w="w-[22px]">
            <Caret big />
          </Cell>
          <Cell label="Isometric drafting">
            <Svg>
              <path d="M2 3L17 17" stroke="#c06b70" />
              <path d="M10 1V20" stroke="#69ac84" />
              <rect x="8" y="8" width="4" height="4" fill="#3b4453" />
            </Svg>
          </Cell>
          <Cell label="Isometric options" w="w-[18px]">
            <Caret big />
          </Cell>
        </div>
        <div className="flex">
          <Cell label="Object snap tracking" on w="w-[29px]">
            <Svg>
              <path d="M0 18.500H20M0 18L15 4" stroke="#fff" />
              <circle cx="8" cy="11" r="2" fill="#fff" stroke="none" />
            </Svg>
          </Cell>
          <span className="w-px" />
          <Cell label="Object snap" on w="w-[29px]">
            <Svg>
              <path d="M6 3.500H18.500V19.500H2.500V7" stroke="#fff" strokeWidth="1.300" />
              <rect x="1" y="1" width="5" height="5" stroke="#fff" strokeWidth="1.300" />
            </Svg>
          </Cell>
          <Cell label="Object snap options" w="w-[21px]">
            <Caret big />
          </Cell>
        </div>
        <div className="flex">
          <Cell label="Annotation visibility" on w="w-[29px]">
            <Compass>
              <circle cx="16" cy="5" r="3.500" />
            </Compass>
          </Cell>
          <Cell label="Auto scale">
            <Compass>
              <path d="M17 1L13 6H16L14 10L19 5H16.500Z" fill="#e8eaec" stroke="none" />
            </Compass>
          </Cell>
          <Cell label="Annotation scale icon">
            <Compass />
          </Cell>
          <button className="flex h-[29px] w-[43px] items-center justify-center gap-1 bg-[#3b4453]">
            1:1
            <Caret big />
          </button>
        </div>
        <div className="flex">
          <Cell label="Workspace">
            <FaCog size={20} color="#e0e2e4" />
          </Cell>
          <Cell label="Workspace options" w="w-5">
            <Caret big />
          </Cell>
          <span className="w-px" />
          <Cell label="Annotation monitor">
            <Plus />
          </Cell>
        </div>
        <Cell label="Isolate objects" w="w-[31px]">
          <Svg>
            <rect x="1" y="1" width="7" height="7" />
            <circle cx="15" cy="9" r="4" />
            <path d="M8 12L12.500 19.500H3.500Z" />
          </Svg>
        </Cell>
        <Cell label="Graphics performance" w="w-[38px]">
          <Svg>
            <path d="M5 0H13L17 4V14H5Z" fill="#2b6fb5" stroke="none" />
            <path d="M0 10H7L9 13H15V19H0Z" fill="#f2b73c" stroke="none" />
            <path d="M10 15L13 18L19 11" stroke="#5cc068" strokeWidth="2" />
            <path d="M0 6.500H8M4.500 1V11" stroke="#cfe4f7" />
          </Svg>
        </Cell>
        <Cell label="Clean screen">
          <Svg>
            <rect x=".5" y="3.500" width="19" height="14" />
            <path d="M13 5H18V10ZM7 16H2V11Z" fill={W} stroke="none" />
            <path d="M3 15L7 11M17 6L13 10" />
          </Svg>
        </Cell>
        <Cell label="Customization" w="w-[29px]">
          <Burger />
        </Cell>
      </div>
    </footer>
  );
}

/* ---------- taskbar ---------- */

const lobe = "M2.900 8A14 14 0 0 1 27.100 8H15A7 7 0 0 0 8.900 18.500Z";

const Chrome = () => (
  <>
    <path d={lobe} fill="#de3c2e" />
    <path d={lobe} fill="#fbc82f" transform="rotate(120 15 15)" />
    <path d={lobe} fill="#2f9f4c" transform="rotate(240 15 15)" />
    <circle cx="15" cy="15" r="7" fill="#fff" />
    <circle cx="15" cy="15" r="5.500" fill="#3b78e8" />
  </>
);

const taskApps: { name: string; open?: boolean; art: ReactNode }[] = [
  {
    name: "Task view",
    art: (
      <>
        <path d="M1 9H22V29H1Z" fill="#26282b" />
        <path d="M8 1H29V23H8Z" fill="#f6f6f6" />
        <path d="M8 9H22V23H8Z" fill="#c6c6c8" />
      </>
    ),
  },
  {
    name: "Teams",
    art: (
      <>
        <circle cx="16" cy="6" r="4.500" fill="#7b83eb" />
        <circle cx="25" cy="7" r="3.500" fill="#5059c9" />
        <path d="M20 12H30V20Q28 25 22 25Z" fill="#5059c9" />
        <path d="M8 12H23V23Q22 30 15 30T8 23Z" fill="#7b83eb" />
        <rect y="7" width="15" height="16" rx="1" fill="#464eb8" />
        <path d="M4 12H11M7.500 12V20" stroke="#fff" strokeWidth="2" />
      </>
    ),
  },
  {
    name: "Zoom",
    art: (
      <>
        <rect width="30" height="30" rx="12" fill="#0b5cff" />
        <text x="15" y="18" fontSize="9" fontWeight="700" fontFamily="Roboto" fill="#fff" textAnchor="middle">
          zoom
        </text>
      </>
    ),
  },
  {
    name: "Archicad",
    art: (
      <>
        <rect x="3" y="3" width="24" height="24" rx="1" fill="#5f86da" />
        <path d="M3 26C8 12 13 5 19 6C23 7 24 11 24 15" fill="none" stroke="#fff" strokeWidth="2.500" />
        <circle cx="24" cy="19" r="1.500" fill="#fff" />
      </>
    ),
  },
  {
    name: "SketchUp",
    art: (
      <>
        <rect x=".5" y=".5" width="29" height="29" fill="#eef5fb" stroke="#9db8d0" />
        <g fill="none" stroke="#0f6a96" strokeWidth="2.200">
          <path d="M6 16L15 21L18 19.500V16L6 9.500L15 4.500L24 9.500V21L15 26L6 21" />
          <path d="M10 11.500L15 8.500L21 12V20L15 23.500" />
        </g>
      </>
    ),
  },
  {
    name: "Notion",
    art: (
      <>
        <path d="M4 5L20 3L26 7V25L9 27L4 22Z" fill="#111" />
        <path d="M9 9L24 8V24L10 25Z" fill="#fff" />
        <path d="M13 22V12L20 21V11" fill="none" stroke="#111" strokeWidth="2.500" />
      </>
    ),
  },
  { name: "Chrome", art: <Chrome /> },
  {
    name: "Settings",
    open: true,
    art: (
      <>
        <g fill="#7d8790">
          {[0, 45, 90, 135].map((a) => (
            <rect key={a} x="11.500" y="0" width="7" height="30" rx="1.500" transform={`rotate(${a} 15 15)`} />
          ))}
          <circle cx="15" cy="15" r="11.500" />
        </g>
        <circle cx="15" cy="15" r="7.500" fill="#dfe8f0" />
        <circle cx="15" cy="15" r="6" fill="#0e64a8" />
      </>
    ),
  },
  {
    name: "Chrome profile F",
    open: true,
    art: (
      <>
        <Chrome />
        <circle cx="26" cy="4" r="10" fill="#6f8790" />
        <text x="26" y="9" fontSize="12" fontFamily="Roboto" fill="#e6edf0" textAnchor="middle">
          F
        </text>
      </>
    ),
  },
  {
    name: "Edge",
    open: true,
    art: (
      <>
        <circle cx="15" cy="15" r="15" fill="#1877c9" />
        <path d="M1 11C4 2 10 0 16 0C25 0 30 7 30 13C30 18 26 20 22 20C18 20 20 18 20 15C20 10 14 7 9 8Q3 9 1 11Z" fill="#35c0c8" />
        <path d="M18 1C27 2 30 8 30 13C30 18 26 20 22 20C19 19 20 18 20 15C20 11 25 9 18 1Z" fill="#5bd68a" />
        <path d="M10 13C9 22 16 27 26 24C20 31 8 31 5 22Q4 16 10 13Z" fill="#0c4e94" />
        <path d="M20 13C14 9 8 15 13 20C17 24 23 24 27 20C24 21 18 21 20 13Z" fill="#e8dcdc" />
      </>
    ),
  },
  {
    name: "Autodesk Access",
    open: true,
    art: (
      <>
        <path d="M15 1L28 8V22L15 29L2 22V8Z" fill="#3c4046" />
        <path d="M15 1L28 8L15 13L2 8Z" fill="#5c6168" />
        <path d="M15 5L23 20H7Z" fill="#15181c" stroke="#a6abb2" />
        <path d="M7 20L15 13L23 20Z" fill="#8a9098" />
      </>
    ),
  },
  {
    name: "Microsoft Store",
    open: true,
    art: (
      <>
        <path d="M9 7V1.500H21V7" fill="none" stroke="#3bb4e8" strokeWidth="2.500" />
        <rect x="1" y="5" width="28" height="25" rx="3" fill="#15507f" />
        <path d="M9 12H14V17H9Z" fill="#f25022" />
        <path d="M16 12H21V17H16Z" fill="#7fba00" />
        <path d="M9 19H14V24H9Z" fill="#00a4ef" />
        <path d="M16 19H21V24H16Z" fill="#ffb900" />
      </>
    ),
  },
  {
    name: "OBS",
    open: true,
    art: (
      <>
        <circle cx="15" cy="15" r="13" fill="#17181a" />
        <g fill="none" stroke="#c9cbce" strokeWidth="1.800">
          <path d="M15 15C10 14 9 8 12 4" />
          <path d="M15 15C10 14 9 8 12 4" transform="rotate(120 15 15)" />
          <path d="M15 15C10 14 9 8 12 4" transform="rotate(240 15 15)" />
        </g>
        <circle cx="26" cy="4" r="7.500" fill="#f40000" />
      </>
    ),
  },
  {
    name: "AutoCAD",
    open: true,
    art: (
      <>
        <path d="M1 3L4 0V20L1 23Z" fill="#f26e85" />
        <rect x="3" width="26" height="22" fill="#d81346" />
        <rect x="3" y="20" width="26" height="10" fill="#7a0a2c" />
        <text x="16" y="16" fontSize="15" fontWeight="700" fontFamily="Open Sans" fill="#fff" textAnchor="middle">
          A
        </text>
        <text x="16" y="28" fontSize="7" fontWeight="700" fontFamily="Open Sans" fill="#fff" textAnchor="middle">
          CAD
        </text>
      </>
    ),
  },
  {
    name: "File Explorer",
    open: true,
    art: (
      <>
        <path d="M0 4Q0 2 2 2H11L14 5H28Q30 5 30 7V15H0Z" fill="#d79a1e" />
        <rect y="7" width="30" height="22" rx="1" fill="#fcd04b" />
        <path d="M5 29V24Q5 21 8 21H22Q25 21 25 24V29Z" fill="#1877c0" />
        <path d="M9 25H21" stroke="#0c4f86" strokeWidth="2" />
      </>
    ),
  },
  {
    name: "Calculator",
    open: true,
    art: (
      <>
        <rect x="4" width="23" height="30" rx="1" fill="#5f6973" />
        <rect x="7" y="3" width="17" height="5" fill="#3fc4ef" />
        <path
          d="M7 10H12V15H7ZM13 10H18V15H13ZM19 10H24V15H19ZM7 16H12V21H7ZM13 16H18V21H13ZM7 22H12V27H7ZM13 22H18V27H13Z"
          fill="#c9ced4"
        />
        <rect x="19" y="16" width="5" height="11" fill="#123f6d" />
      </>
    ),
  },
  {
    name: "Clipchamp",
    open: true,
    art: (
      <>
        <path d="M0 6L27 0Q29 0 29 3V6L0 11Z" fill="#7b3fc0" />
        <path d="M0 10H30V28Q30 30 28 30H2Q0 30 0 28Z" fill="#6a4be8" />
        <path d="M0 10H20V20H0Z" fill="#c98af0" />
        <path d="M10 16H20V23H0V16Z" fill="#a566ee" />
        <path d="M20 10H30V20H20Z" fill="#8a4fe0" />
      </>
    ),
  },
];

function Taskbar() {
  return (
    <nav className="flex h-[60px] items-center bg-[linear-gradient(90deg,#f8e3d5_0%,#f8e3d6_35%,#e9d9d9_46%,#ecdad8_58%,#f8e2d5_68%,#f8e3d5_100%)] font-['Open_Sans',sans-serif] text-[#2b2420]">
      <button aria-label="Widgets, 6 notifications" className="ml-[26px] w-[35px]">
        <svg width="35" height="36" viewBox="0 0 35 36" aria-hidden="true" className="-mt-1">
          <path d="M1 21H29Q28 36 15 36T1 30Z" fill="#e0902f" />
          <path d="M7 10H15V14H23V18H28V23H3V18H7Z" fill="#f7d98a" />
          <path d="M0 26H22V29H0ZM10 21H28V24H10Z" fill="#f9e4a8" />
          <circle cx="24" cy="10" r="10" fill="#b92a28" />
          <text x="24" y="15" fontSize="13" fontFamily="Roboto" fill="#fff" textAnchor="middle">
            6
          </text>
        </svg>
      </button>
      <button aria-label="Start" className="ml-[167px]">
        <svg width="29" height="29" viewBox="0 0 29 29" aria-hidden="true">
          <path d="M0 0H14V14H0Z" fill="#35b0ee" />
          <path d="M15 0H29V14H15Z" fill="#2093dc" />
          <path d="M0 15H14V29H0Z" fill="#1b8ad6" />
          <path d="M15 15H29V29H15Z" fill="#0f74c4" />
        </svg>
      </button>
      <label className="ml-[18px] flex h-[39px] w-[273px] items-center rounded-full bg-[#fdf7f2] pl-[14px] pr-[11px] ring-1 ring-[#e6d5ca]">
        <Svg>
          <circle cx="8.500" cy="8" r="7" stroke="#26211f" strokeWidth="2" />
          <path d="M13 13L18 19" stroke="#26211f" strokeWidth="2.500" />
        </Svg>
        <input
          aria-label="Cari"
          placeholder="Cari"
          className="ml-[11px] min-w-0 flex-1 bg-transparent pt-px text-[16px] placeholder-[#6a625d] outline-none"
        />
        <svg width="52" height="24" viewBox="0 0 52 24" aria-hidden="true">
          <path d="M20 1Q22 10 30 11Q22 12 20 21Q18 12 10 11Q18 10 20 1Z" fill="#f6c020" stroke="#f6c020" />
          <path d="M38 10Q39 14 43 15Q39 16 38 20Q37 16 33 15Q37 14 38 10Z" fill="#f3cd66" />
          <path d="M4 14Q5 17 8 18Q5 19 4 22Q3 19 0 18Q3 17 4 14Z" fill="#2f9fd0" />
          <circle cx="33" cy="3" r="2" fill="#d9503f" />
          <circle cx="49" cy="20" r="1.800" fill="#86bf5a" />
        </svg>
      </label>
      <div className="ml-[3px] flex">
        {taskApps.map((a) => (
          <button
            key={a.name}
            aria-label={a.name}
            className={
              "relative mx-1 flex h-12 w-[47px] items-center justify-center rounded" +
              (a.name === "AutoCAD" ? " bg-[#fdf1ea]" : "")
            }
          >
            <svg width="30" height="30" viewBox="0 0 30 30" className="overflow-visible" aria-hidden="true">
              {a.art}
            </svg>
            {a.open && (
              <span
                className={
                  "absolute bottom-0 h-1 rounded-full " + (a.name === "AutoCAD" ? "w-5 bg-[#62707c]" : "w-2 bg-[#877d78]")
                }
              />
            )}
          </button>
        ))}
      </div>
      <div className="ml-auto mr-[25px] flex shrink-0 items-center">
        <button aria-label="Show hidden icons">
          <Svg s={14}>
            <path d="M1 10L7 4L13 10" stroke="#26211f" strokeWidth="1.800" />
          </Svg>
        </button>
        <Mic size={20} strokeWidth={1.5} color="#4a423d" className="ml-[23px]" />
        <svg width="20" height="14" viewBox="0 0 20 14" fill="none" stroke="#26211f" strokeWidth="1.300" className="ml-[20px]" aria-hidden="true">
          <rect x=".7" y=".7" width="18.600" height="12.600" rx="1.500" />
          <path d="M4 4.500H16M4 7.500H16" strokeDasharray="1.500 2" />
          <path d="M5 10.500H15" />
        </svg>
        <Wifi size={21} strokeWidth={1.8} color="#26211f" className="ml-5" />
        <Volume2 size={20} strokeWidth={1.4} color="#26211f" className="ml-[8px]" />
        <svg width="20" height="16" viewBox="0 0 20 16" fill="none" stroke="#26211f" strokeWidth="1.500" className="ml-[11px]" aria-hidden="true">
          <path d="M7 3H15Q17 3 17 5V12Q17 14 15 14H4Q2 14 2 12V9" />
          <path d="M8 6H14V12H5V9H8ZM18 6H20V10H18ZM3 0L0 5H3L2 9L6 4H3.500Z" fill="#26211f" stroke="none" />
        </svg>
        <div className="ml-3 w-[86px] text-right font-['Noto_Sans',sans-serif] text-[14px] leading-5">
          <div>00.51</div>
          <div>04/06/2025</div>
        </div>
        <button aria-label="Notifications" className="ml-[11px]">
          <svg width="18" height="20" viewBox="0 0 18 20" fill="#26211f" aria-hidden="true">
            <path d="M2 8Q2 2 8 2Q11 2 11 5H9V7H11L9 12H14V10L15 14H16V15H0V14L2 12ZM5 17H11Q8 20 5 17Z" />
            <path d="M11 1H16L12 6H16M9 7H13L10 11H13" fill="none" stroke="#26211f" strokeWidth="1.500" />
          </svg>
        </button>
      </div>
    </nav>
  );
}

export default function App() {
  return (
    <div className="relative flex min-h-screen flex-col overflow-hidden bg-[#222933] font-['Open_Sans','Noto_Sans',sans-serif]">
      <TitleBar />
      <RibbonTabs />
      <Ribbon />
      <FileTabs />
      <div className="h-[5px] bg-[#3b4453]" />
      <Canvas />
      <div className="h-[5px] bg-[#3b4453]" />
      <StatusBar />
      <Taskbar />
      <div className="h-[6px] bg-black" />
      <svg width="14" height="20" viewBox="0 0 14 20" className="absolute left-[978px] top-[143px]" aria-hidden="true">
        <path d="M1 1V15L4.500 12L7 18L9.500 17L7 11H12Z" fill="#fff" stroke="#111" />
      </svg>
    </div>
  );
}
